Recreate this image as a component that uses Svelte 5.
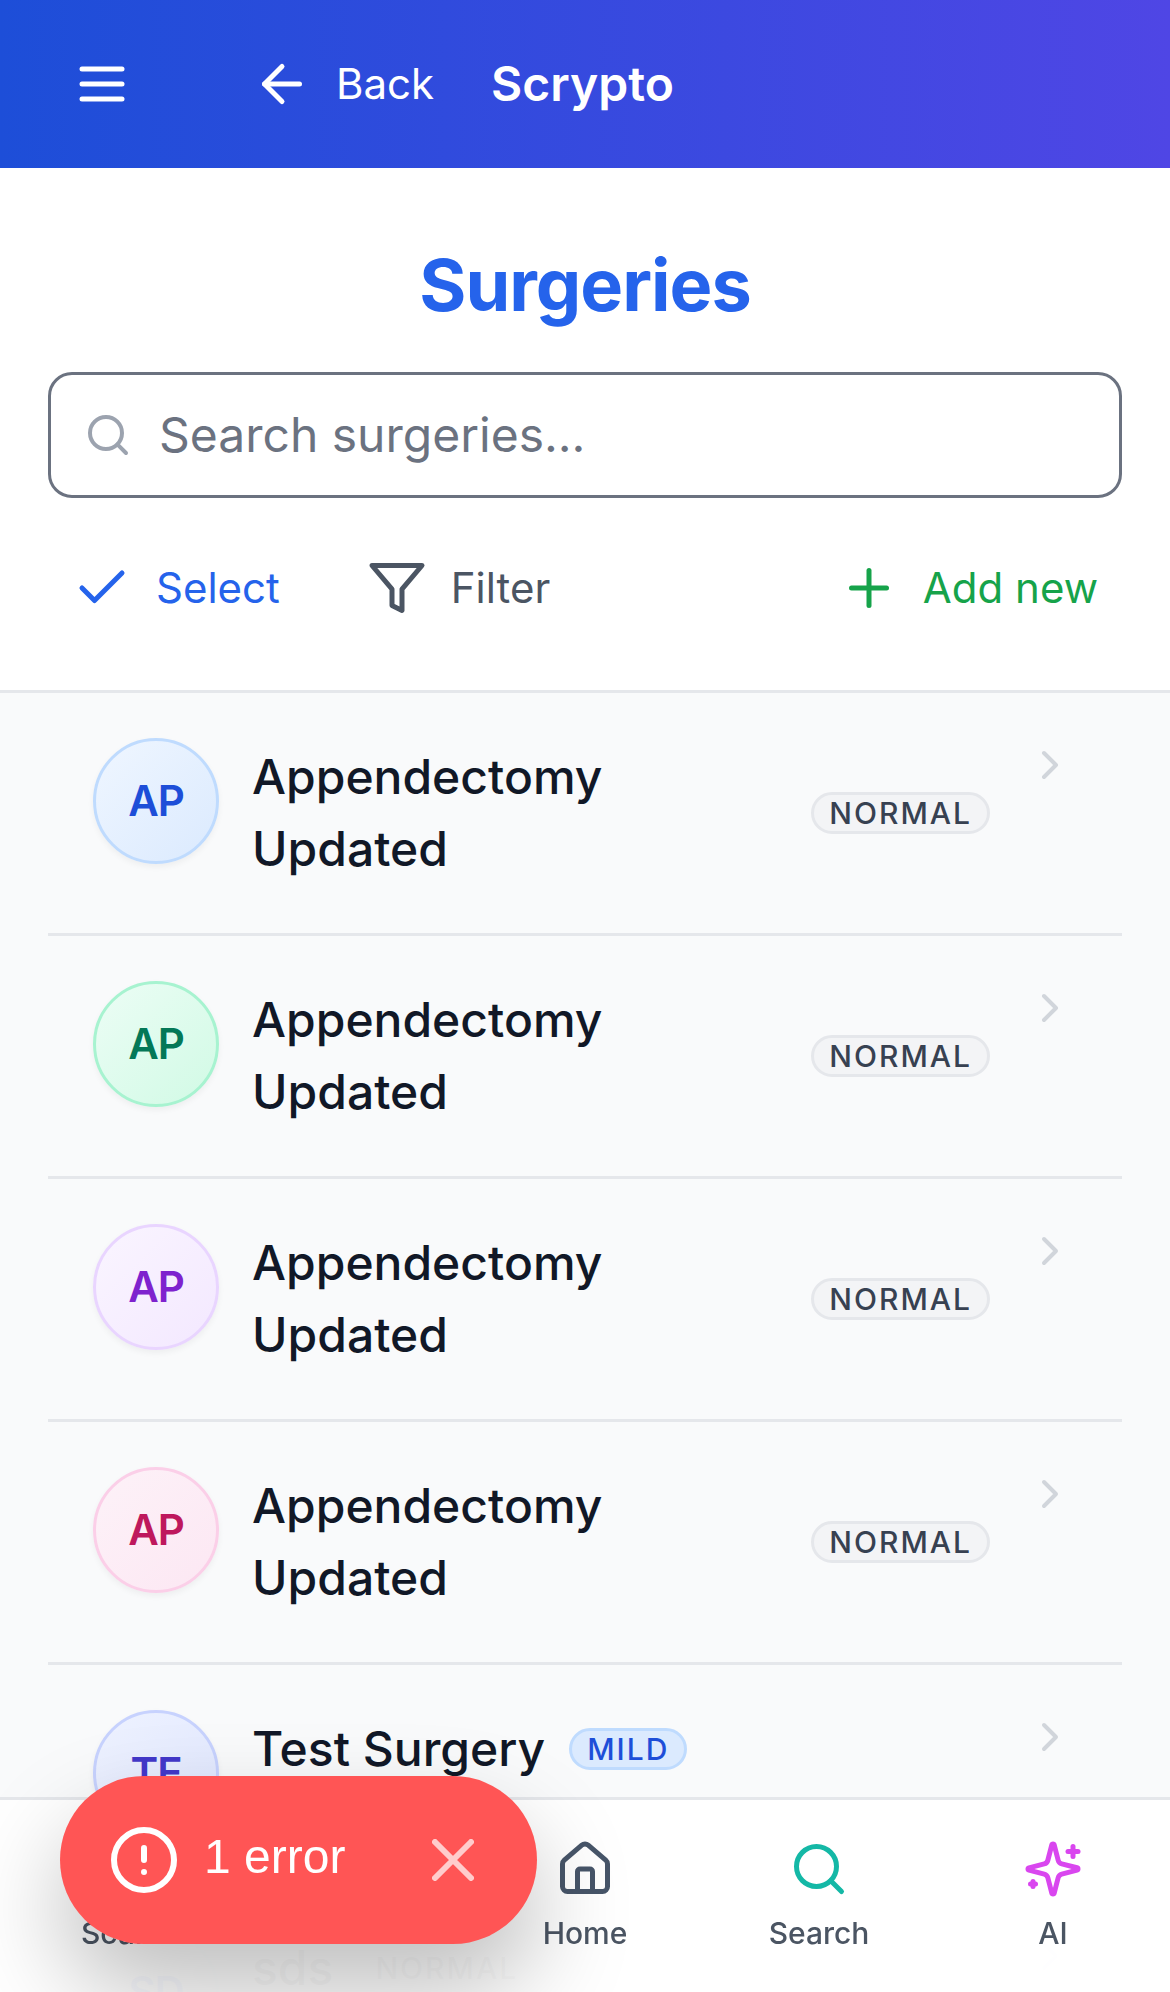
<script>
  const icons = {
    menu: ['M4 6h16', 'M4 12h16', 'M4 18h16'],
    arrowLeft: ['m12 19-7-7 7-7', 'M19 12H5'],
    search: ['M19 11a8 8 0 1 1-16 0 8 8 0 0 1 16 0z', 'm21 21-4.3-4.3'],
    check: ['M20 6 9 17l-5-5'],
    filter: ['M22 3H2l8 9.46V19l4 2v-8.54z'],
    plus: ['M5 12h14', 'M12 5v14'],
    chevron: ['m9 18 6-6-6-6'],
    scan: ['M3 7V5a2 2 0 0 1 2-2h2', 'M17 3h2a2 2 0 0 1 2 2v2', 'M21 17v2a2 2 0 0 1-2 2h-2', 'M7 21H5a2 2 0 0 1-2-2v-2'],
    home: [
      'M15 21v-8a1 1 0 0 0-1-1h-4a1 1 0 0 0-1 1v8',
      'M3 10a2 2 0 0 1 .709-1.528l7-5.999a2 2 0 0 1 2.582 0l7 5.999A2 2 0 0 1 21 10v9a2 2 0 0 1-2 2H5a2 2 0 0 1-2-2z'
    ],
    sparkles: [
      'M9.937 15.5A2 2 0 0 0 8.5 14.063l-6.135-1.582a.5.5 0 0 1 0-.962L8.5 9.936A2 2 0 0 0 9.937 8.5l1.582-6.135a.5.5 0 0 1 .963 0L14.063 8.5A2 2 0 0 0 15.5 9.937l6.135 1.581a.5.5 0 0 1 0 .964L15.5 14.063a2 2 0 0 0-1.437 1.437l-1.582 6.135a.5.5 0 0 1-.963 0z',
      'M20 3v4', 'M22 5h-4', 'M4 17v2', 'M5 18H3'
    ]
  };

  const surgeries = [
    { name: 'Appendectomy Updated', initials: 'AP', tone: 'blue', level: 'Normal' },
    { name: 'Appendectomy Updated', initials: 'AP', tone: 'emerald', level: 'Normal' },
    { name: 'Appendectomy Updated', initials: 'AP', tone: 'purple', level: 'Normal' },
    { name: 'Appendectomy Updated', initials: 'AP', tone: 'pink', level: 'Normal' },
    { name: 'Test Surgery', initials: 'TE', tone: 'indigo', level: 'Mild' },
    { name: 'sds', initials: 'SD', tone: 'blue', level: 'Normal' }
  ];

  const tabs = [
    { label: 'Scan', icon: 'scan', tone: 'slate' },
    { label: 'Home', icon: 'home', tone: 'slate' },
    { label: 'Search', icon: 'search', tone: 'teal' },
    { label: 'AI', icon: 'sparkles', tone: 'fuchsia' }
  ];

  let query = $state('');
  let errorOpen = $state(true);
</script>

{#snippet icon(name, small)}
  <svg class="icon" class:small viewBox="0 0 24 24" aria-hidden="true">
    {#each icons[name] as d}<path {d} />{/each}
  </svg>
{/snippet}

<div class="app">
  <header class="topbar">
    <button class="menu" aria-label="Open menu">{@render icon('menu')}</button>
    <button class="back">{@render icon('arrowLeft')}<span>Back</span></button>
    <span class="brand">Scrypto</span>
  </header>

  <section class="tools">
    <h1>Surgeries</h1>
    <label class="search-box">
      {@render icon('search', true)}
      <input type="text" placeholder="Search surgeries..." aria-label="Search surgeries" bind:value={query} />
    </label>
    <div class="actions">
      <button class="action select">{@render icon('check')}<span>Select</span></button>
      <button class="action filter">{@render icon('filter')}<span>Filter</span></button>
      <button class="action add">{@render icon('plus')}<span>Add new</span></button>
    </div>
  </section>

  <main>
    <ul>
      {#each surgeries as item}
        <li>
          <a href="#surgery" class="row">
            <span class="avatar {item.tone}">{item.initials}</span>
            <span class="info">
              <span class="name">{item.name}</span>
              <span class="badge {item.level.toLowerCase()}">{item.level}</span>
            </span>
            <span class="go">{@render icon('chevron', true)}</span>
          </a>
        </li>
      {/each}
    </ul>
  </main>

  <nav>
    {#each tabs as tab}
      <a href="#{tab.label.toLowerCase()}" class="tab" class:middle={tab.icon === 'home'}>
        <span class="glyph {tab.tone}">{@render icon(tab.icon)}</span>
        <span>{tab.label}</span>
      </a>
    {/each}
  </nav>

  {#if errorOpen}
    <div class="toast" role="status">
      <svg class="alert" viewBox="0 0 66 66" aria-hidden="true">
        <circle cx="33" cy="33" r="30" />
        <path d="M33 21v12M33 45v0" />
      </svg>
      <span class="message">1 error</span>
      <button aria-label="Dismiss" onclick={() => (errorOpen = false)}>
        <svg viewBox="0 0 42 42" aria-hidden="true"><path d="M3 3l36 36M39 3L3 39" /></svg>
      </button>
    </div>
  {/if}
</div>

<style>
  :global(body) {
    margin: 0;
    background: #f9fafb;
  }
  .app {
    height: 100vh;
    overflow: hidden;
    display: flex;
    flex-direction: column;
    font-family: Inter, 'Liberation Sans', sans-serif;
    font-size: 48px;
    line-height: 72px;
    color: #111827;
  }
  button {
    font: inherit;
    color: inherit;
    background: none;
    border: 0;
    padding: 0;
    display: flex;
    align-items: center;
    cursor: pointer;
  }
  a {
    color: inherit;
    text-decoration: none;
  }
  .icon {
    width: 60px;
    height: 60px;
    flex: none;
    display: block;
    fill: none;
    stroke: currentColor;
    stroke-width: 2;
    stroke-linecap: round;
    stroke-linejoin: round;
  }
  .icon.small {
    width: 48px;
    height: 48px;
  }

  .topbar {
    flex: none;
    height: 168px;
    display: flex;
    align-items: center;
    padding: 0 48px;
    color: #fff;
    background: linear-gradient(to right, #1d4ed8, #4f46e5);
  }
  .menu {
    padding: 24px;
  }
  .back {
    gap: 24px;
    margin-left: 96px;
    font-size: 42px;
  }
  .brand {
    margin-left: 57px;
    font-weight: 600;
  }

  .tools {
    flex: none;
    padding: 69px 48px 48px;
    background: #fff;
    border-bottom: 3px solid #e5e7eb;
  }
  h1 {
    margin: 0 0 39px;
    font-size: 72px;
    line-height: 96px;
    font-weight: 700;
    letter-spacing: -1px;
    text-align: center;
    color: #2563eb;
  }
  .search-box {
    display: flex;
    align-items: center;
    gap: 27px;
    height: 120px;
    padding: 0 33px;
    border: 3px solid #6b7280;
    border-radius: 24px;
    color: #9ca3af;
  }
  input {
    flex: 1;
    min-width: 0;
    padding: 0;
    border: 0;
    outline: 0;
    background: none;
    font: inherit;
    color: #111827;
  }
  input::placeholder {
    color: #6b7280;
    opacity: 1;
  }
  .actions {
    display: flex;
    gap: 39px;
    margin-top: 36px;
  }
  .action {
    gap: 24px;
    height: 108px;
    padding: 0 24px;
    font-size: 42px;
  }
  .select { color: #2563eb; }
  .filter { color: #4b5563; }
  .add { color: #16a34a; margin-left: auto; }

  ul {
    list-style: none;
    margin: 0;
    padding: 0 48px;
  }
  li {
    border-bottom: 3px solid #e5e7eb;
  }
  .row {
    display: flex;
    align-items: flex-start;
    padding: 45px 48px 45px 45px;
  }
  .avatar {
    flex: none;
    box-sizing: border-box;
    width: 126px;
    height: 126px;
    display: grid;
    place-items: center;
    border: 3px solid;
    border-radius: 50%;
    font-size: 42px;
    font-weight: 600;
    letter-spacing: -1px;
    box-shadow: 0 3px 6px rgba(0, 0, 0, 0.05);
  }
  .blue { color: #1d4ed8; border-color: #bfdbfe; background: linear-gradient(135deg, #eff6ff, #dbeafe); }
  .emerald { color: #047857; border-color: #a7f3d0; background: linear-gradient(135deg, #ecfdf5, #d1fae5); }
  .purple { color: #7e22ce; border-color: #e9d5ff; background: linear-gradient(135deg, #faf5ff, #f3e8ff); }
  .pink { color: #be185d; border-color: #fbcfe8; background: linear-gradient(135deg, #fdf2f8, #fce7f3); }
  .indigo { color: #4338ca; border-color: #c7d2fe; background: linear-gradient(135deg, #eef2ff, #e0e7ff); }
  .info {
    flex: 1;
    min-width: 0;
    display: flex;
    align-items: center;
    gap: 24px;
    margin: 0 36px 0 33px;
    padding: 3px 0;
  }
  .name {
    font-weight: 500;
  }
  .badge {
    flex: none;
    padding: 0 15px;
    border: 3px solid;
    border-radius: 21px;
    font-size: 30px;
    line-height: 36px;
    font-weight: 500;
    letter-spacing: 2px;
    text-transform: uppercase;
  }
  .normal { color: #374151; background: #f3f4f6; border-color: #e5e7eb; }
  .mild { color: #1d4ed8; background: #dbeafe; border-color: #bfdbfe; }
  .go {
    margin-top: 3px;
    color: #d1d5db;
  }

  nav {
    position: fixed;
    inset: auto 0 0;
    display: grid;
    grid-template-columns: repeat(5, 1fr);
    padding: 39px 0 36px;
    background: rgba(255, 255, 255, 0.98);
    border-top: 3px solid #e5e7eb;
  }
  .tab {
    display: flex;
    flex-direction: column;
    align-items: center;
    gap: 12px;
    font-size: 30px;
    line-height: 45px;
    font-weight: 500;
    color: #4b5563;
  }
  .middle { grid-column: 3; }
  .slate { color: #475569; }
  .teal { color: #14b8a6; }
  .fuchsia { color: #d946ef; }

  .toast {
    position: fixed;
    left: 60px;
    bottom: 48px;
    display: flex;
    align-items: center;
    height: 168px;
    padding: 0 63px 0 51px;
    border-radius: 84px;
    background: #ff5555;
    color: #fff;
    font-family: 'Liberation Sans', sans-serif;
    box-shadow: 0 48px 96px rgba(0, 0, 0, 0.25);
  }
  .toast svg {
    fill: none;
    stroke: currentColor;
    stroke-width: 6;
    stroke-linecap: round;
  }
  .alert {
    width: 66px;
    height: 66px;
    margin-right: 27px;
  }
  .message {
    padding-bottom: 6px;
  }
  .toast button {
    margin-left: 87px;
    opacity: 0.7;
  }
  .toast button svg {
    width: 42px;
    height: 42px;
  }
</style>
